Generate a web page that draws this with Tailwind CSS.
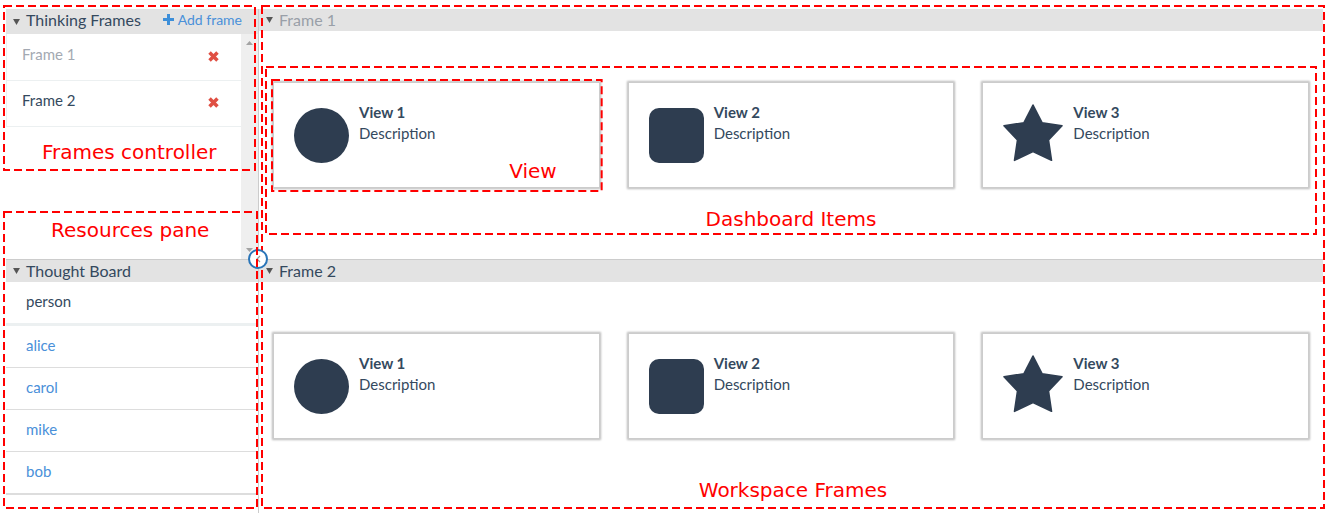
<!DOCTYPE html>
<html lang="en">
<head>
<meta charset="utf-8">
<title>Thinking Frames</title>
<script src="https://cdn.jsdelivr.net/npm/@tailwindcss/browser@4"></script>
</head>
<body class="bg-white font-[Lato,sans-serif] text-[15px] leading-[21px] text-[#34495e]">
<svg class="hidden" aria-hidden="true">
  <symbol id="caret" viewBox="0 0 8 7"><path d="M0 0h8L4 7z" fill="#555"/></symbol>
  <symbol id="cross" viewBox="0 0 10 10"><path d="M1.400 1.400L8.600 8.600M8.600 1.400L1.400 8.600" stroke="#e04f43" stroke-width="3.200"/></symbol>
  <symbol id="plus" viewBox="0 0 11 11"><path d="M5.500 0v11M0 5.500h11" stroke="#3d8fd9" stroke-width="3"/></symbol>
  <symbol id="circle" viewBox="0 0 55 55"><circle cx="27.500" cy="27.500" r="27.500" fill="#2e3d50"/></symbol>
  <symbol id="square" viewBox="0 0 55 55"><rect width="55" height="55" rx="10" fill="#2e3d50"/></symbol>
  <symbol id="star" viewBox="0 0 60 58"><path d="M30 1L39 18.700L59 21.800L45.500 36L48.500 56.300L30 47.600L11.500 56.300L14.500 36L1 21.800L21 18.700z" fill="#2e3d50" stroke="#2e3d50" stroke-width="1.600" stroke-linejoin="round"/></symbol>
</svg>

<div class="flex min-h-screen pt-[9px] pl-[6px] pr-[7px]">
  <aside class="flex w-[253px] shrink-0 flex-col border-r border-[#ccc]">
    <section class="relative z-10 flex h-[250px] flex-col">
      <header class="flex h-[25px] shrink-0 items-center bg-[#e3e3e3] pb-[4px] pl-[7px] pr-[16px]">
        <button class="flex items-center gap-[6px] text-[16px]"><svg class="mt-[5px] h-[6px] w-[7px]"><use href="#caret"/></svg><span>Thinking Frames</span></button>
        <a href="#add" class="ml-auto flex items-center gap-[4px] text-[14px] text-[#4a90d9]"><svg class="h-[11px] w-[11px]"><use href="#plus"/></svg>Add frame</a>
      </header>
      <div class="flex min-h-0 flex-1">
        <ul class="flex-1">
          <li class="flex h-[47px] items-center justify-between border-b border-l border-[#ecf0f1] pl-[15px] pr-[22px] pb-[6px] text-[#a3a9b2]">Frame 1<button aria-label="Remove Frame 1" class="pt-[4px]"><svg class="h-[11px] w-[11px]"><use href="#cross"/></svg></button></li>
          <li class="flex h-[46px] items-center justify-between border-b border-l border-[#ecf0f1] pl-[15px] pr-[22px] pb-[6px]">Frame 2<button aria-label="Remove Frame 2" class="pt-[4px]"><svg class="h-[11px] w-[11px]"><use href="#cross"/></svg></button></li>
        </ul>
        <div class="flex w-[17px] flex-col items-center justify-between bg-[#efefef] pt-[7px] pb-[7px]" aria-hidden="true">
          <svg class="h-[4px] w-[7px]" viewBox="0 0 7 4"><path d="M0 4h7L3.500 0z" fill="#a3a3a3"/></svg>
          <svg class="h-[4px] w-[7px]" viewBox="0 0 7 4"><path d="M0 0h7L3.500 4z" fill="#a3a3a3"/></svg>
        </div>
      </div>
      <div class="pointer-events-none absolute top-[-4px] right-[2px] left-[-3px] h-[166px] font-['DejaVu_Sans'] text-[20px] leading-[24px] text-[#f00]">
        <svg class="h-full w-full overflow-visible p-px"><rect width="100%" height="100%" fill="none" stroke="#f00" stroke-width="2" stroke-dasharray="8 4"/></svg>
        <span class="absolute top-[135px] left-[39px] whitespace-nowrap">Frames controller</span>
      </div>
    </section>

    <section class="relative z-10 flex-1">
      <header class="flex h-[23px] items-center border-t border-[#ccc] bg-[#e3e3e3] pb-[2px] pl-[7px]">
        <button class="flex items-center gap-[6px] text-[16px]"><svg class="mt-[2px] h-[6px] w-[7px]"><use href="#caret"/></svg><span>Thought Board</span></button>
      </header>
      <div class="flex h-[44px] items-center border-b-3 border-[#ecf0f1] pb-[2px] pl-[20px]">person</div>
      <ul class="border-b border-[#ddd] text-[#4a90d9]">
        <li class="flex h-[42px] items-center border-b border-[#ddd] pb-[2px] pl-[20px]"><a href="#alice">alice</a></li>
        <li class="flex h-[42px] items-center border-b border-[#ddd] pb-[2px] pl-[20px]"><a href="#carol">carol</a></li>
        <li class="flex h-[42px] items-center border-b border-[#ddd] pb-[2px] pl-[20px]"><a href="#mike">mike</a></li>
        <li class="flex h-[42px] items-center border-b border-[#ddd] pb-[2px] pl-[20px]"><a href="#bob">bob</a></li>
      </ul>
      <button aria-label="Collapse sidebar" class="absolute -top-[10px] -right-[10px] flex h-[20px] w-[20px] items-center justify-center rounded-full border-2 border-[#2a75b8] bg-white"><svg class="h-[8px] w-[5px]" viewBox="0 0 5 8"><path d="M4 1L1 4l3 3" fill="none" stroke="#999" stroke-width="1.200"/></svg></button>
      <div class="pointer-events-none absolute top-[-48px] right-0 bottom-[4px] left-[-3px] font-['DejaVu_Sans'] text-[20px] leading-[24px] text-[#f00]">
        <svg class="h-full w-full overflow-visible p-px"><rect width="100%" height="100%" fill="none" stroke="#f00" stroke-width="2" stroke-dasharray="8 4"/></svg>
        <span class="absolute top-[7px] left-[48px] whitespace-nowrap">Resources pane</span>
      </div>
    </section>
  </aside>

  <main class="relative min-w-0 flex-1">
    <section class="relative h-[250px]">
      <header class="flex h-[22px] items-center bg-[#e3e3e3] pb-[2px] pl-[7px] text-[#999fa8]">
        <button class="flex items-center gap-[6px] text-[16px]"><svg class="mt-[2px] h-[6px] w-[7px]"><use href="#caret"/></svg><span>Frame 1</span></button>
      </header>
      <div class="grid grid-cols-3 gap-[28px] px-[14px] pt-[51px]">
        <article class="relative flex h-[106px] gap-[10px] border border-[#ccc] pt-[19px] pl-[20px] shadow-[0_0_2px_1px_#bbb]">
          <svg class="mt-[6px] h-[55px] w-[55px]"><use href="#circle"/></svg>
          <div><h3 class="font-bold">View 1</h3><p>Description</p></div>
          <div class="pointer-events-none absolute top-[-4px] right-[-4px] bottom-[-5px] left-[-3px] font-['DejaVu_Sans'] text-[20px] leading-[24px] text-[#f00]">
            <svg class="h-full w-full overflow-visible p-px"><rect width="100%" height="100%" fill="none" stroke="#f00" stroke-width="2" stroke-dasharray="8 4"/></svg>
            <span class="absolute right-[46px] bottom-[9px]">View</span>
          </div>
        </article>
        <article class="flex h-[106px] gap-[10px] border border-[#ccc] pt-[19px] pl-[20px] shadow-[0_0_2px_1px_#bbb]">
          <svg class="mt-[6px] h-[55px] w-[55px]"><use href="#square"/></svg>
          <div><h3 class="font-bold">View 2</h3><p>Description</p></div>
        </article>
        <article class="flex h-[106px] gap-[10px] border border-[#ccc] pt-[19px] pl-[20px] shadow-[0_0_2px_1px_#bbb]">
          <svg class="mt-[2px] h-[58px] w-[60px]"><use href="#star"/></svg>
          <div><h3 class="font-bold">View 3</h3><p>Description</p></div>
        </article>
      </div>
      <div class="pointer-events-none absolute top-[57px] right-[6px] left-[6px] h-[169px] font-['DejaVu_Sans'] text-[20px] leading-[24px] text-[#f00]">
        <svg class="h-full w-full overflow-visible p-px"><rect width="100%" height="100%" fill="none" stroke="#f00" stroke-width="2" stroke-dasharray="8 4"/></svg>
        <span class="absolute inset-x-0 bottom-[4px] text-center">Dashboard Items</span>
      </div>
    </section>

    <section>
      <header class="flex h-[23px] items-center border-t border-[#ccc] bg-[#e3e3e3] pb-[2px] pl-[7px]">
        <button class="flex items-center gap-[6px] text-[16px]"><svg class="mt-[2px] h-[6px] w-[7px]"><use href="#caret"/></svg><span>Frame 2</span></button>
      </header>
      <div class="grid grid-cols-3 gap-[28px] px-[14px] pt-[51px]">
        <article class="flex h-[106px] gap-[10px] border border-[#ccc] pt-[19px] pl-[20px] shadow-[0_0_2px_1px_#bbb]">
          <svg class="mt-[6px] h-[55px] w-[55px]"><use href="#circle"/></svg>
          <div><h3 class="font-bold">View 1</h3><p>Description</p></div>
        </article>
        <article class="flex h-[106px] gap-[10px] border border-[#ccc] pt-[19px] pl-[20px] shadow-[0_0_2px_1px_#bbb]">
          <svg class="mt-[6px] h-[55px] w-[55px]"><use href="#square"/></svg>
          <div><h3 class="font-bold">View 2</h3><p>Description</p></div>
        </article>
        <article class="flex h-[106px] gap-[10px] border border-[#ccc] pt-[19px] pl-[20px] shadow-[0_0_2px_1px_#bbb]">
          <svg class="mt-[2px] h-[58px] w-[60px]"><use href="#star"/></svg>
          <div><h3 class="font-bold">View 3</h3><p>Description</p></div>
        </article>
      </div>
    </section>
    <div class="pointer-events-none absolute top-[-4px] right-[-2px] bottom-[4px] left-[2px] font-['DejaVu_Sans'] text-[20px] leading-[24px] text-[#f00]">
      <svg class="h-full w-full overflow-visible p-px"><rect width="100%" height="100%" fill="none" stroke="#f00" stroke-width="2" stroke-dasharray="8 4"/></svg>
      <span class="absolute inset-x-0 bottom-[7px] text-center">Workspace Frames</span>
    </div>
  </main>
</div>
</body>
</html>
